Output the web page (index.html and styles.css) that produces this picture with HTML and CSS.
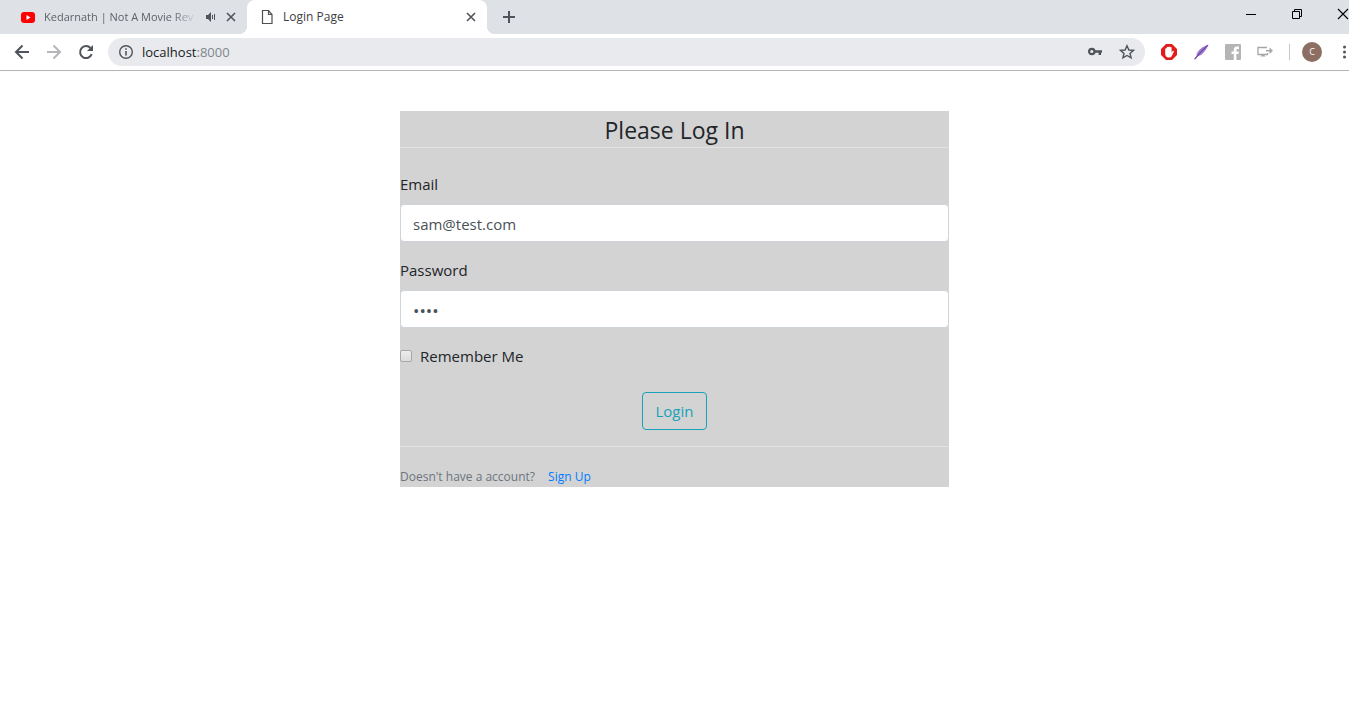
FILE: index.html
```html
<!DOCTYPE html>
<html lang="en">
<head>
<meta charset="utf-8">
<title>Login Page</title>
<link rel="stylesheet" href="styles.css">
</head>
<body>
<header class="browser">
  <div class="tab-strip">
    <div class="tab">
      <svg class="icon" width="16" height="16" viewBox="0 0 16 16"><rect x="1" y="3" width="14" height="11" rx="3" fill="#f00"/><path d="M6.500 6v5l4-2.500z" fill="#fff"/></svg>
      <span class="tab-title tab-title-faded">Kedarnath | Not A Movie Rev</span>
      <svg class="icon" width="12" height="12" viewBox="0 0 12 12"><path d="M1 4h2l3-3v10l-3-3h-2z" fill="#50545a"/><path d="M7.500 4v4M9.500 3v6" stroke="#50545a" fill="none"/></svg>
      <button class="icon-button tab-close" aria-label="Close tab"><svg width="10" height="10" viewBox="0 0 10 10"><path d="M1 1l8 8M9 1l-8 8" stroke="#50545a" stroke-width="1.600"/></svg></button>
    </div>
    <div class="tab tab-active">
      <svg class="icon" width="16" height="16" viewBox="0 0 16 16"><path d="M3.500 1.500h6l3.500 4v9h-9.500zM9.500 1.500v4h3.500" fill="none" stroke="#505050" stroke-width="1.200"/></svg>
      <span class="tab-title">Login Page</span>
      <button class="icon-button tab-close" aria-label="Close tab"><svg width="10" height="10" viewBox="0 0 10 10"><path d="M1 1l8 8M9 1l-8 8" stroke="#50545a" stroke-width="1.600"/></svg></button>
    </div>
    <button class="icon-button new-tab" aria-label="New tab"><svg width="14" height="14" viewBox="0 0 14 14"><path d="M7 1v12M1 7h12" stroke="#50545a" stroke-width="2"/></svg></button>
    <div class="window-controls">
      <button class="icon-button" aria-label="Minimize"><svg width="12" height="12" viewBox="0 0 12 12"><path d="M1 6.500h10" stroke="#000"/></svg></button>
      <button class="icon-button" aria-label="Restore"><svg width="12" height="12" viewBox="0 0 12 12"><path d="M1.500 3.500h7v7h-7zM3.500 3.500v-2h7v7h-2" fill="none" stroke="#000"/></svg></button>
      <button class="icon-button" aria-label="Close window"><svg width="12" height="12" viewBox="0 0 12 12"><path d="M1 1l10 10M11 1l-10 10" stroke="#000" stroke-width="1.100"/></svg></button>
    </div>
  </div>
  <div class="toolbar">
    <nav class="nav-buttons">
      <button class="icon-button slot" aria-label="Back"><svg width="16" height="16" viewBox="0 0 16 16"><path d="M15 8H2M8.500 1.500L2 8l6.500 6.500" fill="none" stroke="#50545a" stroke-width="2"/></svg></button>
      <button class="icon-button slot" aria-label="Forward"><svg width="16" height="16" viewBox="0 0 16 16"><path d="M1 8h13M7.500 1.500L14 8l-6.500 6.500" fill="none" stroke="#b4b6b9" stroke-width="2"/></svg></button>
      <button class="icon-button slot" aria-label="Reload"><svg width="16" height="16" viewBox="0 0 16 16"><path d="M13.700 10.200A6 6 0 1 1 12.500 4" fill="none" stroke="#50545a" stroke-width="2"/><path d="M15 1v6H9z" fill="#50545a"/></svg></button>
    </nav>
    <div class="omnibox">
      <button class="icon-button" aria-label="Site information"><svg width="16" height="16" viewBox="0 0 16 16"><circle cx="8" cy="8" r="6.300" fill="none" stroke="#50545a" stroke-width="1.400"/><path d="M8 7v4.500M8 4.200v1.600" stroke="#50545a" stroke-width="1.600"/></svg></button>
      <div class="address" role="textbox" contenteditable="true" spellcheck="false" aria-label="Address"><span class="host">localhost</span>:8000</div>
      <button class="icon-button slot" aria-label="Saved passwords"><svg width="16" height="16" viewBox="0 0 16 16"><circle cx="4.800" cy="7.500" r="2.700" fill="none" stroke="#50545a" stroke-width="2.200"/><path d="M7.500 7.500H15M12.800 7.500v3.500" stroke="#50545a" stroke-width="2.400"/></svg></button>
      <button class="icon-button slot" aria-label="Bookmark"><svg width="16" height="16" viewBox="0 0 16 16"><path d="M8 1.800l1.900 4.200 4.600.4-3.500 3 1.100 4.500L8 11.500l-4.100 2.400L5 9.400l-3.500-3 4.600-.4z" fill="none" stroke="#50545a" stroke-width="1.400"/></svg></button>
    </div>
    <div class="extensions">
      <button class="icon-button slot" aria-label="Ad blocker"><svg width="16" height="16" viewBox="0 0 16 16"><path d="M5 0h6l5 5v6l-5 5H5l-5-5V5z" fill="#e21b1b"/><path d="M4.200 9.500V4.800q.7-1.100 1.500-.3V3.400q.8-1 1.600-.2.800-1.200 1.700 0 .9-.8 1.600.4v5l1-1.600q1.200-.5 1.300.6l-2.200 4.600q-.9 1.300-2.900 1.300-3.600 0-3.600-4z" fill="#fff"/></svg></button>
      <button class="icon-button slot" aria-label="Feather"><svg width="16" height="16" viewBox="0 0 16 16"><path d="M15.500.5Q8 3 5 7.500 3.300 9.700 3.500 12L1 15l.8.5 2.200-2.700q4-.8 6.500-4 3.500-4 5-8.300z" fill="#a17ad0"/><path d="M2 15Q8 7 15 1.200" fill="none" stroke="#65409d" stroke-width="1.100"/></svg></button>
      <button class="icon-button slot" aria-label="Facebook"><svg width="16" height="16" viewBox="0 0 16 16"><rect width="16" height="16" rx="1" fill="#b5b5b5"/><path d="M8.800 16V10H6.500V7.500h2.300V5.600Q8.800 2.500 12 2.500h2v2.400h-1.400q-1.200 0-1.200 1.200v1.400h2.500l-.4 2.500h-2.100v6z" fill="#fff"/></svg></button>
      <button class="icon-button slot" aria-label="Cast screen"><svg width="16" height="16" viewBox="0 0 16 16"><path d="M10 3.500H1v7h9.500V9" fill="none" stroke="#a6a6a6" stroke-width="1.300"/><path d="M3.500 12.500L5 10.500h2l1.500 2zM9 6h3.500V3.500L16 6.700l-3.500 3.200V7.500H9z" fill="#a6a6a6"/></svg></button>
    </div>
    <span class="divider"></span>
    <button class="avatar" aria-label="Profile">C</button>
    <button class="icon-button menu" aria-label="Menu"><svg width="10" height="16" viewBox="0 0 10 16"><g fill="#50545a"><circle cx="5.500" cy="3" r="1.500"/><circle cx="5.500" cy="8" r="1.500"/><circle cx="5.500" cy="13" r="1.500"/></g></svg></button>
  </div>
</header>
<main class="page">
  <form class="login">
    <h1 class="login-title">Please Log In</h1>
    <div class="field">
      <label for="email">Email</label>
      <input class="control" id="email" type="email" value="sam@test.com">
    </div>
    <div class="field">
      <label for="password">Password</label>
      <input class="control control-password" id="password" type="password" value="test">
    </div>
    <div class="remember">
      <input class="checkbox" id="remember" type="checkbox">
      <label for="remember">Remember Me</label>
    </div>
    <button class="submit" type="button">Login</button>
    <p class="signup">Doesn't have a account? <a href="#signup">Sign Up</a></p>
  </form>
</main>
</body>
</html>
```
FILE: styles.css
```css
* {
  box-sizing: border-box;
}

body {
  margin: 0;
  background: #fff;
  color: #212529;
  font-family: "Open Sans", "Noto Sans", sans-serif;
  font-size: 15px;
  line-height: 24px;
}

button {
  font-family: inherit;
}

svg {
  display: block;
  flex: none;
}

.icon-button {
  display: flex;
  flex: none;
  align-items: center;
  justify-content: center;
  padding: 0;
  border: 0;
  background: none;
}

.slot {
  width: 32px;
  height: 28px;
}

.browser {
  border-bottom: 1px solid #b4b4b4;
}

.tab-strip {
  display: flex;
  height: 34px;
  background: #dee1e6;
}

.tab {
  display: flex;
  align-items: center;
  width: 247px;
  padding: 0 10px 0 20px;
  color: #5f6368;
  font-size: 12px;
}

.tab-active {
  position: relative;
  width: 240px;
  padding-left: 12px;
  border-radius: 8px 8px 0 0;
  background: #fff;
  color: #3c4043;
}

.tab-active::before,
.tab-active::after {
  content: "";
  position: absolute;
  bottom: 0;
  width: 8px;
  height: 8px;
}

.tab-active::before {
  right: 100%;
  background: radial-gradient(circle at 0 0, #dee1e6 8px, #fff 8px);
}

.tab-active::after {
  left: 100%;
  background: radial-gradient(circle at 100% 0, #dee1e6 8px, #fff 8px);
}

.tab-title {
  flex: 1;
  min-width: 0;
  margin: 0 8px;
  white-space: nowrap;
}

.tab-title-faded {
  font-size: 11px;
  mask-image: linear-gradient(to left, transparent, #000 24px);
}

.tab-close {
  width: 12px;
  height: 16px;
  margin-left: 8px;
}

.new-tab {
  width: 44px;
}

.window-controls {
  display: flex;
  gap: 34px;
  height: 28px;
  margin-left: auto;
}

.toolbar {
  display: flex;
  align-items: center;
  height: 36px;
  padding-left: 6px;
}

.nav-buttons,
.extensions {
  display: flex;
}

.omnibox {
  display: flex;
  flex: 1;
  align-items: center;
  height: 28px;
  margin: 0 8px 0 6px;
  padding: 0 2px 0 10px;
  border-radius: 14px;
  background: #e8eaed;
}

.address {
  flex: 1;
  margin-left: 8px;
  color: #80868b;
  font-size: 13px;
}

.host {
  color: #202124;
}

.divider {
  width: 1px;
  height: 16px;
  margin: 0 12px 0 8px;
  background: #c4c6c9;
}

.avatar {
  width: 20px;
  height: 20px;
  padding: 0;
  border: 0;
  border-radius: 50%;
  background: #8d6e63;
  color: #fff;
  font-size: 9px;
  line-height: 20px;
}

.menu {
  margin-left: 17px;
}

.page {
  display: flex;
  justify-content: center;
  padding: 40px 16px;
}

.login {
  display: flex;
  flex: 1;
  flex-direction: column;
  max-width: 549px;
  background: #d3d3d3;
}

.login-title {
  margin: 0 0 24px;
  padding-top: 2px;
  border-bottom: 1px solid #e2e2e2;
  font-size: 23px;
  font-weight: 400;
  line-height: 34px;
  text-align: center;
}

.field {
  display: flex;
  flex-direction: column;
  gap: 8px;
  margin-bottom: 16px;
}

.control {
  width: 100%;
  height: 38px;
  padding: 8px 12px 6px;
  border: 1px solid #ced4da;
  border-radius: 4px;
  background: #fff;
  color: #495057;
  font: inherit;
}

.control-password {
  font-size: 17px;
}

.remember {
  display: flex;
  align-items: center;
  gap: 8px;
  margin-bottom: 24px;
}

.checkbox {
  appearance: none;
  width: 12px;
  height: 12px;
  margin: 0;
  border: 1px solid #a8a8a8;
  border-radius: 2px;
  background: linear-gradient(#ededed, #dcdcdc);
}

.submit {
  align-self: center;
  height: 38px;
  padding: 0 13px;
  border: 1px solid #17a2b8;
  border-radius: 4px;
  background: none;
  color: #17a2b8;
  font-size: 15px;
}

.signup {
  margin: 16px 0 0;
  padding-top: 20px;
  border-top: 1px solid #e2e2e2;
  color: #6c757d;
  font-size: 12px;
  line-height: 20px;
}

.signup a {
  margin-left: 10px;
  color: #007bff;
  text-decoration: none;
}
```
